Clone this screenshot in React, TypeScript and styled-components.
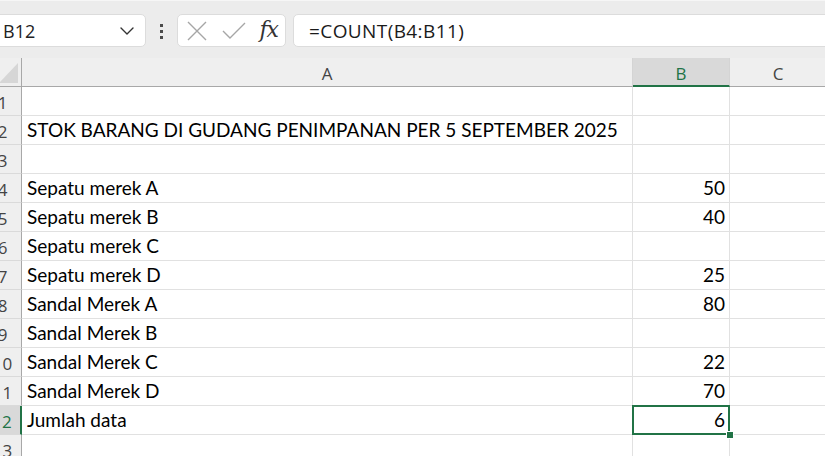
import { FC } from 'react'
import styled, { createGlobalStyle, css } from 'styled-components'
import { ChevronDown } from 'lucide-react'

const GREEN = '#217346'
const GRID = '#e1e1e1'

const GlobalStyle = createGlobalStyle`
  html, body {
    margin: 0;
    padding: 0;
    background: #ffffff;
    overflow: hidden;
  }
`

const Window = styled.div`
  width: 825px;
  height: 456px;
  overflow: hidden;
  background: #ffffff;
  font-family: 'Open Sans', 'Noto Sans', sans-serif;
`

/* formula bar */

const Toolbar = styled.div`
  height: 58px;
  box-sizing: border-box;
  display: flex;
  align-items: flex-start;
  padding-top: 14px;
  background: #ececec;
  border-top: 1px solid #f6f6f6;
`

const WhiteBox = styled.div`
  height: 33px;
  box-sizing: border-box;
  background: #ffffff;
  border: 1px solid #dcdcdc;
  border-radius: 5px;
  display: flex;
  align-items: center;
`

const NameBox = styled(WhiteBox)`
  width: 154px;
  margin-left: -8px;
  margin-top: -1px;
  padding: 0 6px 0 10px;
  justify-content: space-between;
  font-size: 18px;
  color: #222;
`

const Dots = styled.div`
  width: 3px;
  margin: 9px 14px 0 14px;
  display: flex;
  flex-direction: column;
  gap: 3px;

  span {
    width: 3px;
    height: 3px;
    background: #4a4a4a;
  }
`

const FxBox = styled(WhiteBox)`
  width: 109px;
  margin-top: -1px;
  padding: 0 7px 0 8px;
  justify-content: space-between;
`

const FxLabel = styled.span`
  font-family: 'DejaVu Serif', 'Liberation Serif', serif;
  font-style: italic;
  font-size: 22px;
  color: #333;
  letter-spacing: -1px;
  margin-top: -3px;
`

const FormulaBox = styled(WhiteBox)`
  flex: 1;
  margin-left: 7px;
  margin-top: -1px;
  margin-right: -10px;
  padding-left: 15px;
  font-size: 19px;
  letter-spacing: 0.4px;
  color: #1a1a1a;
`

/* sheet grid */

const Sheet = styled.div`
  display: grid;
  grid-template-columns: 38px 611px 97px 97px;
  grid-auto-rows: 29px;
  margin-left: -16px;
`

const HeaderCell = styled.div<{ $active?: boolean }>`
  box-sizing: border-box;
  background: #efefef;
  border-right: 1px solid #d4d4d4;
  border-bottom: 1px solid #a8a8a8;
  display: flex;
  align-items: center;
  justify-content: center;
  font-size: 17px;
  color: #444;
  padding-top: 3px;

  ${({ $active }) =>
    $active &&
    css`
      background: #d9d9d9;
      color: ${GREEN};
      border-bottom: 2px solid ${GREEN};
    `}
`

const Corner = styled.div`
  box-sizing: border-box;
  background: #efefef;
  border-right: 1px solid #a8a8a8;
  border-bottom: 1px solid #a8a8a8;
  display: flex;
  align-items: flex-end;
  justify-content: flex-end;
  padding: 0 3px 3px 0;
`

const RowHead = styled.div<{ $active?: boolean }>`
  box-sizing: border-box;
  background: #efefef;
  border-right: 1px solid #a8a8a8;
  border-bottom: 1px solid #dadada;
  display: flex;
  align-items: center;
  justify-content: center;
  font-size: 17px;
  color: #444;
  padding-top: 2px;

  ${({ $active }) =>
    $active &&
    css`
      background: #d9d9d9;
      color: ${GREEN};
      border-right: 2px solid ${GREEN};
    `}
`

const Cell = styled.div<{ $numeric?: boolean; $selected?: boolean }>`
  position: relative;
  box-sizing: border-box;
  border-right: 1px solid ${GRID};
  border-bottom: 1px solid ${GRID};
  display: flex;
  align-items: flex-end;
  justify-content: ${({ $numeric }) => ($numeric ? 'flex-end' : 'flex-start')};
  padding: 0 4px 3px 5px;
  font-family: Lato, 'Open Sans', sans-serif;
  font-size: 19px;
  color: #000;
  white-space: nowrap;

  ${({ $selected }) =>
    $selected &&
    css`
      &::after {
        content: '';
        position: absolute;
        left: -1px;
        top: -1px;
        right: -1px;
        bottom: -1px;
        border: 2px solid ${GREEN};
      }
      &::before {
        content: '';
        position: absolute;
        right: -5px;
        bottom: -5px;
        width: 6px;
        height: 6px;
        background: ${GREEN};
        border: 1px solid #fff;
        z-index: 1;
      }
    `}
`

const rows: [string, string][] = [
  ['', ''],
  ['STOK BARANG DI GUDANG PENIMPANAN PER 5 SEPTEMBER 2025', ''],
  ['', ''],
  ['Sepatu merek A', '50'],
  ['Sepatu merek B', '40'],
  ['Sepatu merek C', ''],
  ['Sepatu merek D', '25'],
  ['Sandal Merek A', '80'],
  ['Sandal Merek B', ''],
  ['Sandal Merek C', '22'],
  ['Sandal Merek D', '70'],
  ['Jumlah data', '6'],
  ['', ''],
]

const SELECTED_ROW = 12

const CrossIcon: FC = () => (
  <svg width="22" height="22" viewBox="0 0 22 22">
    <path d="M2 2 L20 20 M20 2 L2 20" stroke="#a6a6a6" strokeWidth="1.4" fill="none" />
  </svg>
)

const CheckIcon: FC = () => (
  <svg width="26" height="22" viewBox="0 0 26 22">
    <path d="M2 11 L9 18 L24 3" stroke="#a6a6a6" strokeWidth="1.4" fill="none" />
  </svg>
)

const CornerTriangle: FC = () => (
  <svg width="19" height="20" viewBox="0 0 19 20">
    <polygon points="19,0 19,20 0,20" fill="#d6d6d6" />
  </svg>
)

const App: FC = () => (
  <Window>
    <GlobalStyle />
    <Toolbar>
      <NameBox>
        <span>B12</span>
        <ChevronDown size={24} strokeWidth={1.4} color="#333" />
      </NameBox>
      <Dots>
        <span />
        <span />
        <span />
      </Dots>
      <FxBox>
        <CrossIcon />
        <CheckIcon />
        <FxLabel>fx</FxLabel>
      </FxBox>
      <FormulaBox>=COUNT(B4:B11)</FormulaBox>
    </Toolbar>

    <Sheet>
      <Corner>
        <CornerTriangle />
      </Corner>
      <HeaderCell>A</HeaderCell>
      <HeaderCell $active>B</HeaderCell>
      <HeaderCell>C</HeaderCell>

      {rows.map(([a, b], i) => {
        const n = i + 1
        const active = n === SELECTED_ROW
        return [
          <RowHead key={`h${n}`} $active={active}>
            {n}
          </RowHead>,
          <Cell key={`a${n}`}>{a}</Cell>,
          <Cell key={`b${n}`} $numeric $selected={active}>
            {b}
          </Cell>,
          <Cell key={`c${n}`} />,
        ]
      })}
    </Sheet>
  </Window>
)

export default App
